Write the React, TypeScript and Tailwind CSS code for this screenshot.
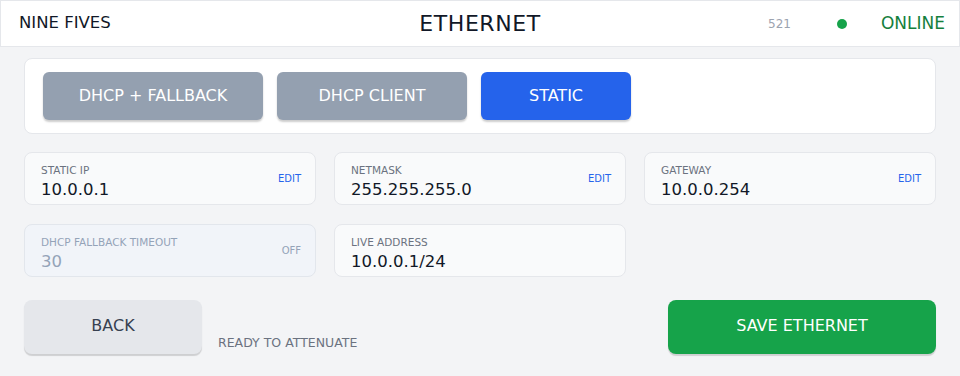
import React from 'react';

const font = { fontFamily: '"DejaVu Sans", "Noto Sans", sans-serif' };

type Field = { label: string; value: string; action?: string; disabled?: boolean };

const row1: Field[] = [
  { label: 'STATIC IP', value: '10.0.0.1', action: 'EDIT' },
  { label: 'NETMASK', value: '255.255.255.0', action: 'EDIT' },
  { label: 'GATEWAY', value: '10.0.0.254', action: 'EDIT' },
];

const row2: Field[] = [
  { label: 'DHCP FALLBACK TIMEOUT', value: '30', action: 'OFF', disabled: true },
  { label: 'LIVE ADDRESS', value: '10.0.0.1/24' },
];

function FieldCard({ field }: { field: Field }) {
  const { label, value, action, disabled } = field;
  return (
    <div
      className={`h-[53px] rounded-lg border flex items-center justify-between pl-4 pr-[14px] ${
        disabled ? 'bg-[#f1f4f9] border-[#e2e6ec]' : 'bg-[#f9fafb] border-[#e5e7eb]'
      }`}
    >
      <div className="flex flex-col self-start pt-[10px]">
        <span className={`text-[10.5px] leading-[14px] ${disabled ? 'text-[#94a3b8]' : 'text-[#6b7280]'}`}>{label}</span>
        <span className={`text-[16.5px] leading-[22px] mt-[2px] ${disabled ? 'text-[#94a3b8]' : 'text-[#111827]'}`}>{value}</span>
      </div>
      {action && (
        <span className={`text-[10px] ${disabled ? 'text-[#94a3b8]' : 'text-[#2563eb]'}`}>{action}</span>
      )}
    </div>
  );
}

export default function App() {
  const modes = [
    { name: 'DHCP + FALLBACK', w: 'w-[220px]', active: false },
    { name: 'DHCP CLIENT', w: 'w-[190px]', active: false },
    { name: 'STATIC', w: 'w-[150px]', active: true },
  ];

  return (
    <div className="w-[960px] h-[376px] bg-[#f3f4f6] flex flex-col" style={font}>
      <header className="h-[47px] bg-white border border-[#e5e7eb] flex items-center pl-[18px] pr-[14px] relative">
        <span className="text-[16.5px] text-[#111827]">NINE FIVES</span>
        <span className="absolute left-1/2 -translate-x-1/2 text-[22px] text-[#111827] tracking-wide">ETHERNET</span>
        <div className="ml-auto flex items-center">
          <span className="text-[12px] text-[#9ca3af]">521</span>
          <span className="w-[10px] h-[10px] rounded-full bg-[#16a34a] ml-[46px]" />
          <span className="text-[17px] text-[#15803d] ml-[34px]">ONLINE</span>
        </div>
      </header>

      <div className="px-6 pt-[11px] flex flex-col">
        <div className="bg-white border border-[#e5e7eb] rounded-lg h-[76px] flex items-center gap-[14px] px-[18px]">
          {modes.map((m) => (
            <button
              key={m.name}
              className={`${m.w} h-[48px] rounded-md text-white text-[16px] shadow-[0_2px_2px_rgba(0,0,0,0.2)] ${
                m.active ? 'bg-[#2563eb]' : 'bg-[#94a0b0]'
              }`}
            >
              {m.name}
            </button>
          ))}
        </div>

        <div className="grid grid-cols-3 gap-x-[18px] gap-y-[19px] mt-[18px]">
          {row1.map((f) => (
            <FieldCard key={f.label} field={f} />
          ))}
          {row2.map((f) => (
            <FieldCard key={f.label} field={f} />
          ))}
        </div>

        <div className="flex items-start mt-[23px]">
          <button className="w-[178px] h-[54px] rounded-lg bg-[#e5e7eb] text-[#374151] text-[16px] shadow-[0_2px_1px_rgba(0,0,0,0.15)] pb-[3px]">
            BACK
          </button>
          <span className="text-[12.5px] text-[#6b7280] ml-4 mt-[34px]">READY TO ATTENUATE</span>
          <button className="ml-auto w-[268px] h-[54px] rounded-lg bg-[#16a34a] text-white text-[16px] shadow-[0_2px_1px_rgba(0,0,0,0.15)] pb-[2px]">
            SAVE ETHERNET
          </button>
        </div>
      </div>
    </div>
  );
}
